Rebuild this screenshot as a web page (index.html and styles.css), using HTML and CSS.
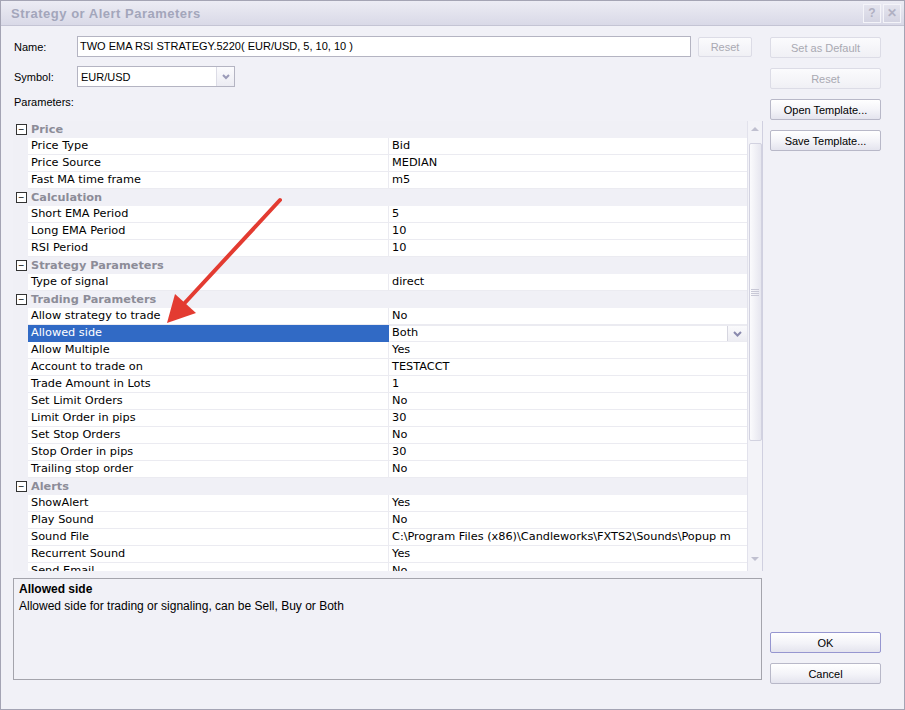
FILE: index.html
```html
<!DOCTYPE html>
<html lang="en">
<head>
    <meta charset="UTF-8">
    <title>Strategy or Alert Parameters</title>
    <link rel="stylesheet" href="styles.css">
</head>
<body>
    <div class="window">
        <div class="titlebar">
            <span class="title">Strategy or Alert Parameters</span>
            <div class="caption-buttons">
                <span class="cap-btn">?</span>
                <span class="cap-btn">&#x2715;</span>
            </div>
        </div>

        <div class="content">
            <div class="left">
                <div class="form-row name-row">
                    <label class="lbl">Name:</label>
                    <div class="textbox">TWO EMA RSI STRATEGY.5220( EUR/USD, 5, 10, 10 )</div>
                    <button class="btn small disabled">Reset</button>
                </div>
                <div class="form-row symbol-row">
                    <label class="lbl">Symbol:</label>
                    <div class="combo">
                        <span>EUR/USD</span>
                        <span class="combo-btn">
                            <svg width="8" height="6" viewBox="0 0 8 6"><path d="M1 1 L4 4 L7 1" fill="none" stroke="#9a9ab8" stroke-width="2"/></svg>
                        </span>
                    </div>
                </div>
                <div class="lbl params-lbl">Parameters:</div>

                <div class="grid">
                    <div class="rows">
                        <div class="cat"><span class="toggle">&minus;</span><span class="cat-name">Price</span></div>
                        <div class="row"><span class="gut"></span><span class="name">Price Type</span><span class="value">Bid</span></div>
                        <div class="row"><span class="gut"></span><span class="name">Price Source</span><span class="value">MEDIAN</span></div>
                        <div class="row"><span class="gut"></span><span class="name">Fast MA time frame</span><span class="value">m5</span></div>
                        <div class="cat"><span class="toggle">&minus;</span><span class="cat-name">Calculation</span></div>
                        <div class="row"><span class="gut"></span><span class="name">Short EMA Period</span><span class="value">5</span></div>
                        <div class="row"><span class="gut"></span><span class="name">Long EMA Period</span><span class="value">10</span></div>
                        <div class="row"><span class="gut"></span><span class="name">RSI Period</span><span class="value">10</span></div>
                        <div class="cat"><span class="toggle">&minus;</span><span class="cat-name">Strategy Parameters</span></div>
                        <div class="row"><span class="gut"></span><span class="name">Type of signal</span><span class="value">direct</span></div>
                        <div class="cat"><span class="toggle">&minus;</span><span class="cat-name">Trading Parameters</span></div>
                        <div class="row"><span class="gut"></span><span class="name">Allow strategy to trade</span><span class="value">No</span></div>
                        <div class="row selected"><span class="gut"></span><span class="name">Allowed side</span><span class="value">Both<span class="cell-btn"><svg width="9" height="6" viewBox="0 0 9 6"><path d="M1 1 L4.5 4.5 L8 1" fill="none" stroke="#8a8aae" stroke-width="2"/></svg></span></span></div>
                        <div class="row"><span class="gut"></span><span class="name">Allow Multiple</span><span class="value">Yes</span></div>
                        <div class="row"><span class="gut"></span><span class="name">Account to trade on</span><span class="value">TESTACCT</span></div>
                        <div class="row"><span class="gut"></span><span class="name">Trade Amount in Lots</span><span class="value">1</span></div>
                        <div class="row"><span class="gut"></span><span class="name">Set Limit Orders</span><span class="value">No</span></div>
                        <div class="row"><span class="gut"></span><span class="name">Limit Order in pips</span><span class="value">30</span></div>
                        <div class="row"><span class="gut"></span><span class="name">Set Stop Orders</span><span class="value">No</span></div>
                        <div class="row"><span class="gut"></span><span class="name">Stop Order in pips</span><span class="value">30</span></div>
                        <div class="row"><span class="gut"></span><span class="name">Trailing stop order</span><span class="value">No</span></div>
                        <div class="cat"><span class="toggle">&minus;</span><span class="cat-name">Alerts</span></div>
                        <div class="row"><span class="gut"></span><span class="name">ShowAlert</span><span class="value">Yes</span></div>
                        <div class="row"><span class="gut"></span><span class="name">Play Sound</span><span class="value">No</span></div>
                        <div class="row"><span class="gut"></span><span class="name">Sound File</span><span class="value">C:\Program Files (x86)\Candleworks\FXTS2\Sounds\Popup m</span></div>
                        <div class="row"><span class="gut"></span><span class="name">Recurrent Sound</span><span class="value">Yes</span></div>
                        <div class="row"><span class="gut"></span><span class="name">Send Email</span><span class="value">No</span></div>
                    </div>
                    <div class="scrollbar">
                        <span class="sb-arrow up"></span>
                        <div class="sb-thumb"><span class="grip"></span></div>
                        <span class="sb-arrow down"></span>
                    </div>
                </div>

                <div class="description">
                    <div class="desc-title">Allowed side</div>
                    <div class="desc-text">Allowed side for trading or signaling, can be Sell, Buy or Both</div>
                </div>
            </div>

            <div class="right">
                <div class="top-buttons">
                    <button class="btn disabled">Set as Default</button>
                    <button class="btn disabled">Reset</button>
                    <button class="btn">Open Template...</button>
                    <button class="btn">Save Template...</button>
                </div>
                <div class="bottom-buttons">
                    <button class="btn default">OK</button>
                    <button class="btn">Cancel</button>
                </div>
            </div>
        </div>

        <!-- annotation arrow over the grid -->
        <svg class="arrow" width="905" height="710" viewBox="0 0 905 710">
            <line x1="280" y1="200" x2="181" y2="307" stroke="#e33b31" stroke-width="4" stroke-linecap="round"/>
            <polygon points="167,323 175,294 196,313" fill="#e33b31"/>
        </svg>
    </div>
</body>
</html>
```

FILE: styles.css
```css
* {
    box-sizing: border-box;
}
body {
    margin: 0;
    background: #f1f1f7;
    font-family: "Liberation Sans", Arial, sans-serif;
    font-size: 11px;
    color: #000;
}
.window {
    position: relative;
    width: 905px;
    height: 710px;
    background: #f1f1f7;
    border: 1px solid #a4a4b4;
    overflow: hidden;
}
.titlebar {
    height: 25px;
    display: flex;
    align-items: center;
    justify-content: space-between;
    padding: 0 3px 0 10px;
    background: linear-gradient(to bottom, #ececf4, #d9d9e7);
    border-bottom: 1px solid #c4c4d4;
}
.title {
    font-weight: bold;
    font-size: 13px;
    color: #a3a6bb;
    letter-spacing: 0.5px;
}
.caption-buttons {
    display: flex;
    gap: 2px;
}
.cap-btn {
    width: 18px;
    height: 19px;
    display: flex;
    align-items: center;
    justify-content: center;
    background: linear-gradient(to bottom, #e4e4ee, #d4d4e2);
    border: 1px solid #f4f4f9;
    color: #b0b0c2;
    font-weight: bold;
    font-size: 12px;
}
.content {
    display: flex;
    padding: 10px 0 0 12px;
    gap: 7px;
}
.left {
    width: 750px;
}
.lbl {
    color: #000;
    padding-left: 1px;
}
.form-row {
    display: flex;
    align-items: center;
    height: 21px;
}
.form-row .lbl {
    width: 64px;
}
.symbol-row {
    margin-top: 9px;
}
.textbox {
    width: 614px;
    height: 21px;
    background: #fff;
    border: 1px solid #b4b4c2;
    padding: 3px 0 0 2px;
    white-space: nowrap;
}
.btn {
    font-family: "Liberation Sans", Arial, sans-serif;
    font-size: 11px;
    color: #000;
    height: 21px;
    width: 111px;
    border: 1px solid #b8b8c8;
    border-radius: 2px;
    background: linear-gradient(to bottom, #ffffff, #f3f3f8 55%, #e4e4ee);
    padding: 0;
}
.btn.disabled {
    color: #a9a9b2;
    border-color: #dcdce6;
    background: linear-gradient(to bottom, #fbfbfd, #f0f0f5);
}
.btn.small {
    width: 54px;
    height: 20px;
    margin-left: 7px;
}
.btn.default {
    border-color: #9696d0;
}
.combo {
    width: 158px;
    height: 21px;
    background: #fff;
    border: 1px solid #b4b4c2;
    display: flex;
    align-items: center;
    justify-content: space-between;
    padding-left: 3px;
}
.combo-btn {
    width: 18px;
    height: 19px;
    border-left: 1px solid #dcdce6;
    display: flex;
    align-items: center;
    justify-content: center;
    background: linear-gradient(to bottom, #fbfbfd, #ececf3);
}
.params-lbl {
    margin-top: 9px;
    height: 25px;
}
.grid {
    display: flex;
    height: 450px;
    overflow: hidden;
}
.rows {
    width: 734px;
    height: 450px;
    overflow: hidden;
    font-family: "DejaVu Sans", Verdana, sans-serif;
    font-size: 11.3px;
}
.cat,
.row {
    display: flex;
    flex-shrink: 0;
    height: 17px;
    align-items: center;
}
.cat {
    background: #f0f0f6;
}
.toggle {
    width: 11px;
    height: 11px;
    margin: 0 0 0 3px;
    border: 1px solid #333;
    background: #fff;
    display: flex;
    align-items: center;
    justify-content: center;
    font-family: "Liberation Sans", Arial, sans-serif;
    font-size: 10px;
    line-height: 1;
    color: #000;
}
.cat-name {
    margin-left: 4px;
    font-weight: bold;
    color: #8c8c98;
}
.gut {
    width: 15px;
    height: 17px;
    background: #f0f0f6;
}
.name,
.value {
    height: 17px;
    background: #fff;
    border-bottom: 1px solid #ebebf1;
    padding: 1px 0 0 3px;
    white-space: nowrap;
    overflow: hidden;
}
.name {
    width: 361px;
    border-right: 1px solid #ebebf1;
}
.value {
    width: 358px;
    position: relative;
}
.selected .name {
    background: #316ac5;
    color: #fff;
    border-color: #316ac5;
}
.selected .value {
    border-top: 1px solid #ebebf1;
    padding-top: 0;
}
.cell-btn {
    position: absolute;
    right: 0;
    top: 0;
    width: 20px;
    height: 16px;
    border-left: 1px solid #d6d6e0;
    background: linear-gradient(to bottom, #fafafc, #ececf2);
    display: flex;
    align-items: center;
    justify-content: center;
}
.scrollbar {
    width: 16px;
    height: 450px;
    background: #f3f3f8;
    border-left: 1px solid #e2e2ec;
    border-right: 1px solid #d0d0e0;
    display: flex;
    flex-direction: column;
    align-items: center;
}
.sb-arrow {
    width: 0;
    height: 0;
    border-left: 4px solid transparent;
    border-right: 4px solid transparent;
}
.sb-arrow.up {
    margin-top: 6px;
    border-bottom: 4px solid #c0c0d0;
}
.sb-arrow.down {
    margin-top: 116px;
    border-top: 4px solid #c0c0d0;
}
.sb-thumb {
    margin-top: 12px;
    width: 13px;
    height: 298px;
    border: 1px solid #d2d2e0;
    border-radius: 2px;
    background: linear-gradient(to right, #fbfbfd, #e6e6ef);
    display: flex;
    align-items: center;
    justify-content: center;
}
.grip {
    width: 8px;
    height: 7px;
    background: repeating-linear-gradient(to bottom, #c8c8d6 0 1px, transparent 1px 2px);
}
.description {
    margin-top: 7px;
    width: 749px;
    height: 102px;
    border: 1px solid #a4a4ac;
    padding: 3px 5px;
    font-size: 12px;
}
.desc-title {
    font-weight: bold;
    margin-bottom: 3px;
}
.right {
    width: 111px;
    display: flex;
    flex-direction: column;
    justify-content: space-between;
    height: 673px;
}
.top-buttons {
    display: flex;
    flex-direction: column;
    gap: 10px;
    margin-top: 1px;
}
.bottom-buttons {
    display: flex;
    flex-direction: column;
    gap: 10px;
    margin-bottom: 25px;
}
.arrow {
    position: absolute;
    left: -1px;
    top: -1px;
    pointer-events: none;
}
```
